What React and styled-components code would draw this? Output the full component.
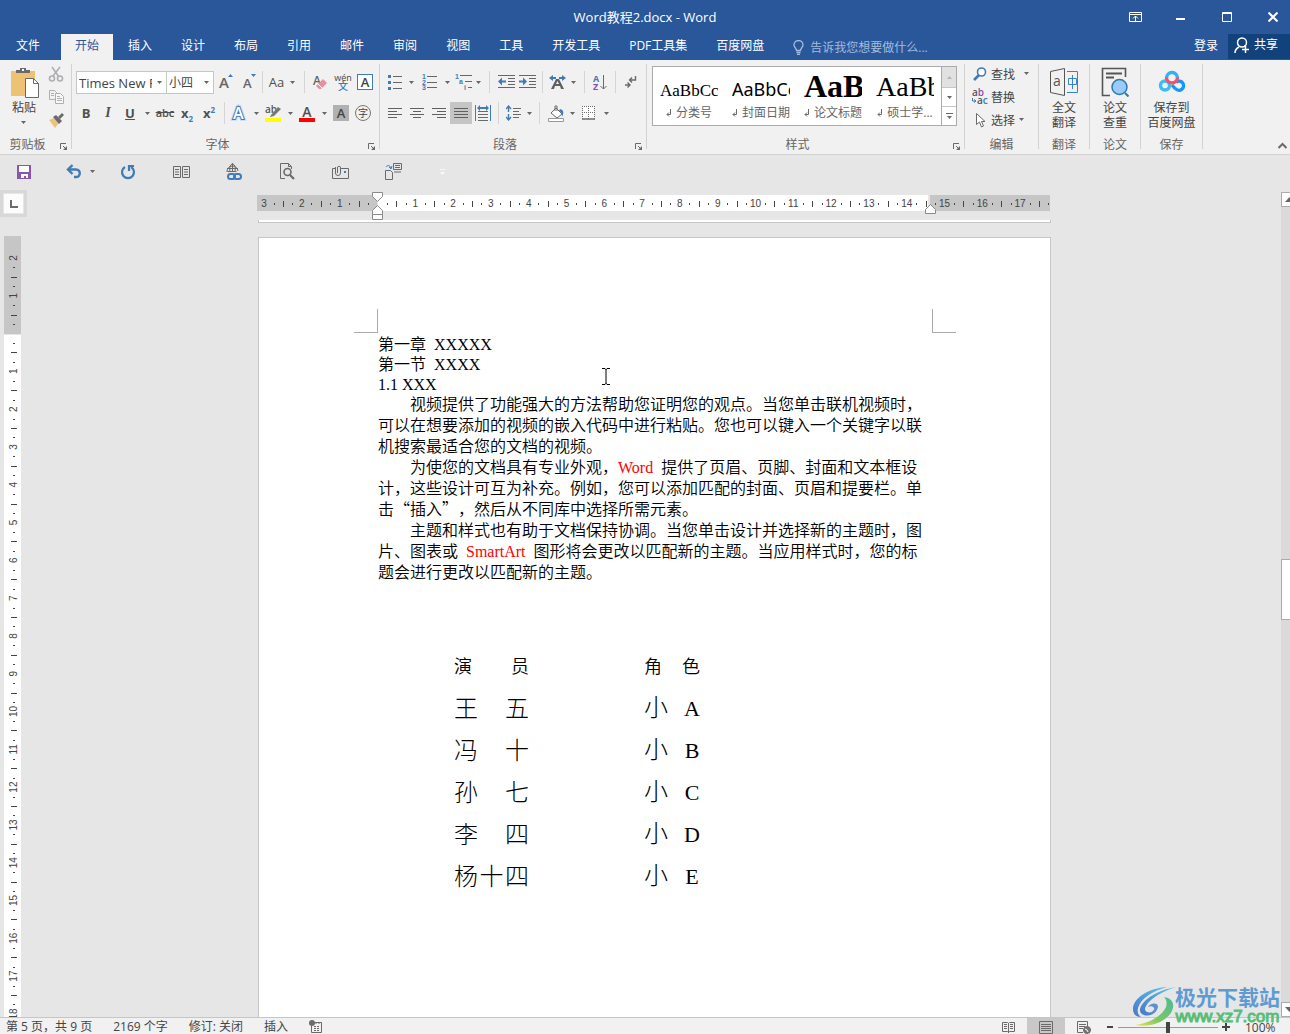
import React from "react";
import styled, { createGlobalStyle, css } from "styled-components";

const UI = '"Open Sans", "Noto Sans CJK SC", sans-serif';
const C = {
  blue: "#2a579a",
  darkBlue: "#12427b",
  ribbon: "#f1f1f1",
  desk: "#e6e6e6",
  line: "#d2d2d2",
  edge: "#c6c6c6",
  ink: "#444444",
  muted: "#666666",
  icon: "#6a6a6a",
  accent: "#417bb5",
};

const Global = createGlobalStyle`
  *, *::before, *::after { box-sizing: border-box; }
  body { margin: 0; background: ${C.desk}; font-family: ${UI}; font-size: 12px; color: ${C.ink}; }
  button, select, input { font: inherit; color: inherit; }
  button { border: 0; padding: 0; background: none; cursor: default; }
  svg { display: block; flex: none; }
`;

const Shell = styled.div`
  position: relative;
  display: flex;
  flex-direction: column;
  height: 100vh;
  overflow: hidden;
`;

/* ---------- title bar and tabs ---------- */
const Header = styled.header`
  background: ${C.blue};
  color: #fff;
`;
const TitleRow = styled.div`
  display: grid;
  grid-template-columns: 1fr auto 1fr;
  align-items: center;
  height: 34px;
`;
const Title = styled.h1`
  grid-column: 2;
  margin: 0;
  font-size: 13px;
  line-height: 18px;
  font-weight: 400;
`;
const WindowControls = styled.div`
  display: flex;
  justify-content: flex-end;
  margin-right: -6px;
`;
const WindowButton = styled.button`
  display: grid;
  place-items: center;
  width: 46px;
  height: 32px;
`;
const TabRow = styled.nav`
  display: flex;
  height: 26px;
`;
const Tabs = styled.div`
  display: flex;
  gap: 1px;
  flex: 1;
`;
const Tab = styled.button`
  padding: ${(p) => (p.$file ? "0 20px 2px 16px" : "0 14px 2px")};
  line-height: 24px;
  white-space: nowrap;
  color: ${(p) => (p.$active ? C.blue : "#fff")};
  background: ${(p) => (p.$active ? C.ribbon : "transparent")};
`;
const TellMe = styled.label`
  display: flex;
  align-items: center;
  gap: 6px;
  margin-left: 14px;
  color: #a3bbdd;
`;
const TellInput = styled.input`
  width: 140px;
  padding: 0;
  border: 0;
  background: none;
  outline: 0;
  &::placeholder { color: #a3bbdd; opacity: 1; }
`;
const Share = styled.button`
  display: flex;
  align-items: center;
  gap: 4px;
  height: 25px;
  padding: 0 12px 3px 6px;
  line-height: 22px;
  background: ${C.darkBlue};
  color: #fff;
`;
const SignIn = styled.button`
  padding: 0 10px 2px;
  line-height: 24px;
  color: #fff;
`;

/* ---------- ribbon ---------- */
const Ribbon = styled.section`
  display: flex;
  height: 95px;
  background: ${C.ribbon};
  border-bottom: 1px solid ${C.line};
`;
const GroupBox = styled.div`
  display: flex;
  flex-direction: column;
`;
const GroupBody = styled.div`
  display: flex;
  flex: 1;
  padding: ${(p) => p.$pad || "0"};
`;
const GroupFoot = styled.div`
  display: flex;
  height: 20px;
  align-items: center;
  color: ${C.muted};
`;
const GroupLabel = styled.span`
  flex: 1;
  text-align: center;
`;
const Launcher = styled.button`
  width: 16px;
  height: 16px;
  padding: 6px 0 0 5px;
`;
const GroupLine = styled.div`
  width: 1px;
  margin: 4px 0 5px;
  background: ${C.line};
`;
const ToolRows = styled.div`
  display: grid;
  align-content: start;
  gap: 9px;
  padding-top: 11px;
`;
const ToolRow = styled.div`
  display: flex;
  height: 22px;
`;
const Tool = styled.button`
  display: flex;
  align-items: center;
  justify-content: center;
  gap: 6px;
  width: ${(p) => p.$w || 22}px;
  height: 22px;
  background: ${(p) => (p.$on ? "#c5c5c5" : "transparent")};
`;
const SepSlot = styled.span`
  display: flex;
  justify-content: center;
  width: ${(p) => p.$w}px;
  &::before { content: ""; width: 1px; background: #d5d5d5; }
`;
const Combo = styled.label`
  display: grid;
  grid-template-columns: minmax(0, 1fr) 14px;
  align-items: center;
  width: ${(p) => p.$w}px;
  height: 23px;
  border: 1px solid ${C.edge};
  background: #fff;
  & + & { border-left: 0; }
  > svg { grid-area: 1 / 2; justify-self: center; }
`;
const ComboSelect = styled.select`
  grid-area: 1 / 1;
  width: 100%;
  height: 21px;
  padding: 0 0 0 2px;
  border: 0;
  outline: 0;
  appearance: none;
  background: transparent;
  font-size: ${(p) => p.$size || 12}px;
`;
const Glyph = styled.span`
  font-size: ${(p) => p.$size || 13}px;
  line-height: 16px;
  font-weight: ${(p) => p.$weight || 700};
  color: ${(p) => p.$color || "#505050"};
  ${(p) => p.$italic && css`font-style: italic; font-family: "Liberation Serif", serif;`}
  ${(p) => p.$deco && css`text-decoration: ${p.$deco};`}
  sub, sup { font-size: 8px; line-height: 0; color: ${C.accent}; }
`;
const ColorBar = styled.span`
  display: grid;
  justify-items: center;
  border-bottom: 4px solid ${(p) => p.$color};
  width: 16px;
  height: 18px;
`;
const FramedA = styled.span`
  width: 16px;
  height: 16px;
  line-height: 14px;
  font-size: 13px;
  font-weight: 600;
  border: 1px solid ${(p) => (p.$fill ? "#b1b1b1" : C.accent)};
  background: ${(p) => (p.$fill ? "#b1b1b1" : "#fff")};
`;
const CircledChar = styled.span`
  width: 16px;
  height: 16px;
  border: 1px solid #777;
  border-radius: 50%;
  font-size: 10px;
  line-height: 14px;
`;
const Pinyin = styled.span`
  display: grid;
  font-size: 9px;
  line-height: 9px;
  b { font-size: 10px; font-weight: 500; color: ${C.accent}; }
`;
const BigButton = styled.button`
  display: flex;
  flex-direction: column;
  align-items: center;
  gap: 2px;
  width: ${(p) => p.$w}px;
  padding-top: 6px;
  line-height: 15px;
`;
const BigIcon = styled.span`
  display: grid;
  place-items: center;
  height: 32px;
`;
const BigText = styled.span`
  display: grid;
  justify-items: center;
  gap: ${(p) => p.$gap || 0}px;
`;
const SideColumn = styled.div`
  display: grid;
  grid-auto-rows: 23px;
  padding: 2px 7px 0 0;
`;
const SideTool = styled.button`
  display: grid;
  place-items: center;
  width: 16px;
`;
const EditColumn = styled.div`
  display: grid;
  grid-auto-rows: 23px;
  padding-top: 2px;
`;
const EditButton = styled.button`
  display: flex;
  align-items: center;
  gap: 3px;
  > svg:last-child { margin-left: ${(p) => p.$gap || 0}px; }
`;
const CollapseSlot = styled.div`
  display: flex;
  flex: 1;
  align-items: flex-end;
  justify-content: flex-end;
  padding: 0 3px 4px;
`;

/* ---------- style gallery ---------- */
const Gallery = styled.div`
  display: flex;
  height: 60px;
  border: 1px solid #ababab;
  background: #fff;
`;
const StyleItem = styled.button`
  width: 72px;
  padding: 0 7px;
  color: ${C.muted};
`;
const Preview = styled.span`
  display: block;
  overflow: hidden;
  height: 34px;
  font-family: "Liberation Serif", serif;
  font-size: 28px;
  line-height: 34px;
  text-align: left;
  white-space: nowrap;
  color: #000;
`;
const Sample = styled.span`
  font-family: ${(p) => p.$font};
  font-size: ${(p) => p.$size}px;
  font-weight: ${(p) => p.$weight || 400};
  line-height: 1;
`;
const StyleName = styled.span`
  display: flex;
  align-items: center;
  justify-content: center;
  gap: 4px;
  line-height: 18px;
  white-space: nowrap;
`;
const GalleryScroll = styled.div`
  display: grid;
  grid-template-rows: 20px 1fr 1fr;
  width: 15px;
  border-left: 1px solid #ababab;
`;
const GalleryButton = styled.button`
  display: grid;
  place-items: center;
  background: ${(p) => (p.$off ? "#e1e1e1" : "#fff")};
  & + & { border-top: 1px solid ${C.edge}; }
`;

/* ---------- quick access ---------- */
const QuickBar = styled.div`
  display: flex;
  align-items: center;
  height: 35px;
  padding: 0 0 2px 13px;
`;
const QuickButton = styled.button`
  display: grid;
  place-items: center;
  width: ${(p) => (p.$narrow ? 14 : 22)}px;
  height: 24px;
  margin-right: ${(p) => p.$after}px;
`;

/* ---------- work area ---------- */
const Work = styled.main`
  display: flex;
  flex: 1;
  min-height: 0;
`;
const Gutter = styled.div`
  width: 28px;
  overflow: hidden;
`;
const TabStop = styled.button`
  display: grid;
  place-items: center;
  width: 27px;
  height: 27px;
  margin-bottom: 19px;
  border: 3px solid #d8d8d8;
  background: #fcfcfc;
  box-shadow: inset 0 0 0 1px #e6e6e6;
`;
const Canvas = styled.div`
  display: flex;
  flex: 1;
  flex-direction: column;
  align-items: center;
  overflow: hidden;
`;
const PreviousPage = styled.div`
  flex: none;
  width: 793px;
  height: 3px;
  margin-bottom: 14px;
  background: #fff;
  border: 1px solid ${C.edge};
  border-top: 0;
`;
const Page = styled.article`
  position: relative;
  flex: 1 0 auto;
  width: 793px;
  padding-top: 71px;
  background: #fff;
  border: 1px solid ${C.edge};
  border-bottom: 0;
  color: #000;
`;
const CropRow = styled.div`
  display: flex;
  justify-content: space-between;
  padding: 0 94px 0 95px;
`;
const CropMark = styled.span`
  width: 24px;
  height: 24px;
  border-bottom: 1px solid #ababab;
  border-${(p) => p.$side}: 1px solid #ababab;
`;
const Body = styled.div`
  padding: 0 118px 0 119px;
  font-family: "Noto Sans CJK SC", sans-serif;
  font-weight: 350;
  font-size: 16px;
  line-height: 21px;
  text-spacing-trim: space-all;
`;
const Heading = styled.h2`
  margin: 0;
  font-size: 16px;
  line-height: 20px;
  font-weight: 350;
`;
const Paragraph = styled.p`
  margin: 0;
  text-indent: 32px;
`;
const Latin = styled.span`
  font-family: "Liberation Serif", serif;
  font-weight: 400;
  line-height: 1;
  color: ${(p) => (p.$red ? "#f00" : "inherit")};
  margin: 0 ${(p) => (p.$after ? 8 : 0)}px 0 ${(p) => (p.$before ? 8 : 0)}px;
`;
const CastTable = styled.table`
  margin: 62px 0 0 76px;
  border-collapse: collapse;
  font-size: 24px;
  font-weight: 300;
  line-height: 24px;
  th { font-size: 18px; font-weight: 350; }
  th, td { height: 42px; padding: 0; }
  th:first-child, td:first-child { padding-right: 115px; }
`;
const Spread = styled.span`
  display: flex;
  align-items: baseline;
  justify-content: space-between;
  width: ${(p) => p.$w}px;
`;
const Letter = styled.span`
  width: 16px;
  text-align: center;
  font-family: "Liberation Serif", serif;
  font-size: 22px;
  font-weight: 400;
`;
const Caret = styled.svg`
  position: absolute;
  left: 343px;
  top: 130px;
`;
const ScrollBar = styled.div`
  width: 9px;
  overflow: hidden;
  padding-top: 2px;
`;
const ScrollInner = styled.div`
  display: flex;
  flex-direction: column;
  width: 17px;
  height: 100%;
  background: #dadada;
`;
const ScrollButton = styled.button`
  display: grid;
  place-items: center;
  height: 15px;
  background: #fff;
  border: 1px solid #ababab;
`;
const ScrollThumb = styled.div`
  height: 61px;
  background: #fff;
  border: 1px solid #ababab;
`;
const Spring = styled.div`
  flex: ${(p) => p.$grow || 1};
`;

/* ---------- status bar ---------- */
const StatusBar = styled.footer`
  display: flex;
  height: 17px;
  padding: 0 13px 0 6px;
  line-height: 17px;
  white-space: nowrap;
  background: ${C.ribbon};
  border-top: 1px solid ${C.edge};
`;
const StatusItem = styled.button`
  margin-right: 21px;
`;
const ViewButton = styled.button`
  display: grid;
  place-items: center;
  width: 38px;
  padding-top: 2px;
  background: ${(p) => (p.$on ? "#c8c8c8" : "transparent")};
`;
const ZoomGroup = styled.div`
  display: flex;
  align-items: center;
  padding-top: 2px;
`;
const ZoomButton = styled.button`
  display: grid;
  place-items: center;
  width: 15px;
`;
const ZoomRange = styled.input`
  width: 100px;
  height: 12px;
  margin: 0;
  appearance: none;
  background: linear-gradient(#999, #999) center / 100% 1px no-repeat;
  &::-webkit-slider-thumb {
    appearance: none;
    width: 4px;
    height: 11px;
    background: ${C.ink};
  }
`;
const ZoomValue = styled.output`
  width: 32px;
  margin-left: 12px;
`;
const Watermark = styled.div`
  position: absolute;
  right: 10px;
  bottom: 7px;
  display: flex;
  align-items: flex-end;
  pointer-events: none;
`;
const WatermarkText = styled.div`
  display: grid;
  justify-items: center;
  font-family: "Noto Sans CJK SC", sans-serif;
  font-weight: 700;
  font-size: 21px;
  line-height: 22px;
  color: #5f9bd3;
  margin-left: -2px;
`;
const WatermarkUrl = styled.span`
  font-family: "Liberation Sans", sans-serif;
  font-weight: 400;
  font-size: 17px;
  line-height: 20px;
  color: #58be78;
  -webkit-text-stroke: 1px #58be78;
`;

/* ---------- drawings ---------- */
const Arrow = ({ up, color = "#666" }) => (
  <svg width="5" height="3" viewBox="0 0 5 3" fill={color}>
    <path d={up ? "M0 3h5L2.5 0z" : "M0 0h5L2.5 3z"} />
  </svg>
);
const Svg = ({ w = 16, h = 16, children, ...rest }) => (
  <svg width={w} height={h} viewBox={`0 0 ${w} ${h}`} fill="none" stroke={C.icon} {...rest}>
    {children}
  </svg>
);
const lines = (list) => list.map(([x1, x2, y], i) => <path key={i} d={`M${x1} ${y + 0.5}H${x2}`} />);

const PasteIcon = () => (
  <Svg w={30} h={32}>
    <path d="M2 5h24v25H2z" fill="#eec274" stroke="none" />
    <path d="M7 7V4h4V2h6v2h4v3z" fill="#6a6a6a" stroke="none" />
    <path d="M13 3h2v2h-2z" fill="#fff" stroke="none" />
    <path d="M16.500 12.500h8l5 5v14h-13z" fill="#fff" />
    <path d="M24.500 12.500v5h5" />
  </Svg>
);
const CutIcon = () => (
  <Svg stroke="#b0aeb2" strokeWidth="1.6">
    <path d="M4 1l7 10M12 1L5 10" />
    <circle cx="4" cy="12.500" r="2.500" />
    <circle cx="12" cy="12.500" r="2.500" />
  </Svg>
);
const CopyIcon = () => (
  <Svg stroke="#b0aeb2">
    <path d="M1.500 1.500h5l2 2v7h-7z" />
    <path d="M7.500 4.500h5l3 3v7h-8z" fill="#f8f6f8" />
    <path d="M3 4.500h3M3 6.500h3M9 7.500h3M9 9.500h5M9 11.500h5" />
  </Svg>
);
const BrushIcon = () => (
  <Svg stroke="none">
    <path d="M1 8l5-2 5 5-4 5z" fill="#eec27c" />
    <path d="M5 5l3-2 6 6-3 3z" fill="#6a6a6a" />
    <path d="M10 5l4-4 2 2-4 4z" fill="#6a6a6a" />
  </Svg>
);
const ShrinkGrow = ({ up }) => (
  <Svg w={16} h={18} stroke="none">
    <text x={up ? 1 : 2} y="15" fontSize={up ? 15 : 13} fontFamily="Open Sans" fontWeight="600" fill="#666">A</text>
    <path d={up ? "M10 4h5l-2.500-3z" : "M10 1h5l-2.500 3z"} fill={C.accent} />
  </Svg>
);
const EraserIcon = () => (
  <Svg stroke="none">
    <text x="1" y="11" fontSize="12" fontFamily="Open Sans" fontWeight="600" fill="#666">A</text>
    <path d="M4 12l7-7 4 4-6 6H7z" fill="#ea8f9d" />
    <path d="M6 10l4 4" stroke="#fff" />
  </Svg>
);
const OutlineIcon = () => (
  <Svg w={18} h={18}>
    <text x="3" y="15" fontSize="16" fontFamily="Open Sans" fontWeight="600" fill="#fff" stroke="#cfe0f3" strokeWidth="4" paintOrder="stroke">A</text>
    <text x="3" y="15" fontSize="16" fontFamily="Open Sans" fontWeight="600" fill="#fff" stroke={C.accent} strokeWidth="2" paintOrder="stroke">A</text>
  </Svg>
);
const HighlightIcon = () => (
  <Svg h={18} stroke="none">
    <text x="0" y="9" fontSize="10" fontFamily="Open Sans" fontWeight="600" fill="#555">ab</text>
    <path d="M6 11l7-8 3 2-7 7-4 1z" fill="#777" />
    <path d="M0 14h16v4H0z" fill="#ff0" />
  </Svg>
);
const BulletsIcon = () => (
  <Svg w={14} stroke="#666">
    <path d="M0 1h3v3H0zM0 7h3v3H0zM0 13h3v3H0z" fill={C.accent} stroke="none" />
    {lines([[5, 14, 2], [5, 14, 8], [5, 14, 14]])}
  </Svg>
);
const Digits = ({ items }) =>
  items.map(([t, x, y]) => (
    <text key={t} x={x} y={y} fontSize="7" fontFamily="Liberation Sans" fontWeight="700" fill={C.accent} stroke="none">{t}</text>
  ));
const NumbersIcon = () => (
  <Svg w={15} stroke="#666">
    <Digits items={[["1", 0, 5], ["2", 0, 11], ["3", 0, 16]]} />
    {lines([[5, 15, 2], [5, 15, 8], [5, 15, 13]])}
  </Svg>
);
const MultiIcon = () => (
  <Svg w={17} stroke="#666">
    <Digits items={[["1", 0, 5], ["a", 4, 10], ["i", 9, 16]]} />
    {lines([[5, 17, 1], [10, 17, 7], [13, 17, 13]])}
  </Svg>
);
const IndentIcon = ({ out }) => (
  <Svg w={17} stroke="#666">
    {lines([[0, 17, 1], [10, 17, 4], [10, 17, 7], [10, 17, 10], [0, 17, 13]])}
    <path d={out ? "M0 7.500l4-4v3h4v2H4v3z" : "M8 7.500l-4-4v3H0v2h4v3z"} fill={C.accent} stroke="none" />
  </Svg>
);
const ScaleIcon = () => (
  <Svg w={17} stroke="none">
    <path d="M0 4l4-3v2h3v2H4v2zM17 4l-4-3v2h-3v2h3v2z" fill={C.accent} />
    <path d="M2 15L7 5h3l5 10h-3l-1-3H6l-1 3zm5-5h3L8.500 7z" fill="#606060" />
  </Svg>
);
const SortIcon = () => (
  <Svg w={14} h={17}>
    <text x="0" y="8" fontSize="9" fontFamily="Open Sans" fontWeight="700" fill={C.accent} stroke="none">A</text>
    <text x="0" y="16" fontSize="9" fontFamily="Open Sans" fontWeight="700" fill="#8b4db0" stroke="none">Z</text>
    <path d="M10.500 1v14M7.500 12l3 3 3-3" />
  </Svg>
);
const MarksIcon = () => (
  <Svg w={12} strokeWidth="1.400">
    <path d="M10.500 2v4h-6M7 3.500L4.500 6 7 8.500M0 11h5M2.500 8.500L5 11l-2.500 2.500" />
  </Svg>
);
const alignRows = {
  left: [[0, 14, 2], [0, 9, 5], [0, 14, 8], [0, 9, 11]],
  center: [[0, 14, 2], [3, 11, 5], [0, 14, 8], [3, 11, 11]],
  right: [[0, 14, 2], [5, 14, 5], [0, 14, 8], [5, 14, 11]],
  full: [[0, 14, 2], [0, 14, 5], [0, 14, 8], [0, 14, 11]],
};
const AlignIcon = ({ kind }) => <Svg w={14} h={14} stroke="#606060">{lines(alignRows[kind])}</Svg>;
const DistributeIcon = () => (
  <Svg>
    <path d="M.5 0v16M15.500 0v16" stroke={C.accent} />
    <path d="M2 3l3-3v2h6V0l3 3-3 3V4H5v2z" fill={C.accent} stroke="none" />
    {lines([[3, 13, 6], [3, 13, 9], [3, 13, 12], [3, 13, 15]])}
  </Svg>
);
const SpacingIcon = () => (
  <Svg w={15}>
    <path d="M2.500 1v6M2.500 9v6M0 4l2.500-3L5 4M0 12l2.500 3L5 12" stroke={C.accent} strokeWidth="1.400" />
    {lines([[7, 15, 3], [7, 13, 6], [7, 15, 9], [7, 13, 12]])}
  </Svg>
);
const BucketIcon = () => (
  <Svg w={17} h={17}>
    <path d="M3 8l5-5 6 6-5 4z" fill="#fff" />
    <path d="M7 6V1h2v5" />
    <path d="M12 4c4 1 4 4 2 8 0-3 0-5-3-6z" fill={C.accent} stroke="none" />
    <path d="M.5 13.500h15v3H.5z" fill="#fff" stroke="#999" />
  </Svg>
);
const BordersIcon = () => (
  <Svg w={14} h={14}>
    <path d="M.5.500h12v12H.5z" fill="#fff" stroke="none" />
    <path d="M0 .5h13M0 6.500h13M.5 0v13M6.500 0v13M12.500 0v13" strokeDasharray="1 1" />
    <path d="M0 13h13" strokeWidth="1.500" />
  </Svg>
);
const FindIcon = () => (
  <Svg stroke={C.accent}>
    <circle cx="9.500" cy="6" r="4" strokeWidth="1.600" fill="#fff" />
    <path d="M7 9l-5 5" strokeWidth="2.600" />
  </Svg>
);
const ReplaceIcon = () => (
  <Svg w={16} h={17} stroke="none" fontFamily="Open Sans" fontSize="10" fontWeight="600">
    <text x="0" y="8" fill="#555">a<tspan fill="#8b4db0">b</tspan></text>
    <text x="5" y="16" fill="#555">a<tspan fill={C.accent}>c</tspan></text>
    <path d="M.5 10v3h3M2 11.500L4 13l-2 1.500" stroke={C.accent} />
  </Svg>
);
const PointerIcon = () => (
  <Svg><path d="M4.500 1.500v11l3-2.500 2 5 2-1-2-4.500h3.500z" fill="#fff" /></Svg>
);
const TranslateIcon = () => (
  <Svg w={28} h={28}>
    <path d="M.5 3.500l14-3v27l-14-3z" stroke="#555" />
    <path d="M17 3.500h10.500v21H17" stroke="#3a82d0" />
    <path d="M18.500 10.500h8v6h-8zM22.500 7v14" stroke="#3a82d0" />
    <text x="3" y="18" fontSize="14" fontFamily="Open Sans" fill="#555" stroke="none">a</text>
  </Svg>
);
const PaperIcon = () => (
  <Svg w={28} h={30} stroke="#555">
    <path d="M9 28.500H1.500V1.500h23V10" strokeWidth="1.600" />
    <path d="M5 6.500h16M5 10.500h8" strokeWidth="2" />
    <circle cx="18.500" cy="20" r="7.500" fill="#9acbf8" stroke="#2a7ab0" strokeWidth="1.500" />
    <path d="M24 26l3.500 3.500" stroke="#2a7ab0" strokeWidth="2" />
  </Svg>
);
const NetdiskIcon = () => (
  <Svg w={28} h={24} strokeWidth="3.400">
    <circle cx="7" cy="15.500" r="4.500" stroke="#38bdf8" />
    <path d="M17.500 18.500a4.500 4.500 0 1 0 1-6.500" stroke="#1598f5" />
    <path d="M14 15l3.500 4" stroke="#1598f5" />
    <path d="M8.500 8a5.500 5.500 0 0 1 11 0" stroke="#35b0f4" />
    <path d="M8.500 7.500a5.500 5.500 0 0 0 11 0" stroke="#f4516c" />
  </Svg>
);
const Zero = 119.5;
const Cm = 37.8;
const HRuler = () => {
  const marks = [];
  for (let q = -12; q <= 71; q++) {
    const x = Zero + (q * Cm) / 4;
    if (q === 0 || x > 792) continue;
    if (q % 4 === 0) marks.push(<text key={q} x={x} y="17" textAnchor="middle">{Math.abs(q / 4)}</text>);
    else if (q % 2 === 0) marks.push(<path key={q} d={`M${Math.round(x)} 11h1v6h-1z`} />);
    else marks.push(<path key={q} d={`M${Math.round(x)} 13h1v2h-1z`} />);
  }
  return (
    <svg width="793" height="30" viewBox="0 0 793 30" overflow="visible" fontFamily="Liberation Sans" fontSize="10" fill="#444">
      <path d="M-1 5H119v16H-1zM672 5h120v16H672z" fill="#c6c6c6" />
      <path d="M120 5h550v16H120z" fill="#fff" />
      {marks}
      <g fill="#fff" stroke="#8a8a8a">
        <path d="M114.500 2.500h10v4l-5 5-5-5zM114.500 24.500v-4l5-5 5 5v4zM114.500 24.500h10v5h-10z" />
        <path d="M667.500 23.500v-4l5-5 5 5v4z" />
      </g>
    </svg>
  );
};
const VRuler = () => {
  const marks = [];
  for (let q = -8; q <= 73; q++) {
    const y = 97.5 + (q * Cm) / 4;
    if (q === 0) continue;
    if (q % 4 === 0)
      marks.push(<text key={q} transform={`translate(13 ${y}) rotate(-90)`} textAnchor="middle">{Math.abs(q / 4)}</text>);
    else if (q % 2 === 0) marks.push(<path key={q} d={`M7 ${Math.round(y)}h6v1H7z`} />);
    else marks.push(<path key={q} d={`M9 ${Math.round(y)}h2v1H9z`} />);
  }
  return (
    <svg width="28" height="790" viewBox="-4 0 28 790" fontFamily="Liberation Sans" fontSize="10" fill="#444">
      <path d="M0 0h17v98H0z" fill="#c6c6c6" />
      <path d="M0 99h17v691H0z" fill="#fff" />
      {marks}
    </svg>
  );
};

const Group = ({ label, launcher, pad, children }) => (
  <>
    <GroupBox role="group" aria-label={label}>
      <GroupBody $pad={pad}>{children}</GroupBody>
      <GroupFoot>
        <GroupLabel>{label}</GroupLabel>
        {launcher && (
          <Launcher aria-label={label + "设置"}>
            <Svg w={8} h={8}>
              <path d="M.5 6V.5H6M3 3l3.500 3.500" />
              <path d="M7 3v4H3z" fill={C.icon} stroke="none" />
            </Svg>
          </Launcher>
        )}
      </GroupFoot>
    </GroupBox>
    <GroupLine />
  </>
);
const Drop = ({ w }) => <Tool $w={w} aria-label="更多"><Arrow /></Tool>;

const TABS = ["文件", "开始", "插入", "设计", "布局", "引用", "邮件", "审阅", "视图", "工具", "开发工具", "PDF工具集", "百度网盘"];
const STYLES = [
  { name: "分类号", text: "AaBbCc", size: 17, font: '"Liberation Serif", serif' },
  { name: "封面日期", text: "AaBbCc", size: 18, font: '"Noto Sans", sans-serif' },
  { name: "论文标题", text: "AaBb", size: 32, weight: 700, font: '"Liberation Serif", serif' },
  { name: "硕士学...", text: "AaBb", size: 28, font: '"Liberation Serif", serif' },
];
const CAST = [
  ["王五", "A"],
  ["冯十", "B"],
  ["孙七", "C"],
  ["李四", "D"],
  ["杨十四", "E"],
];
const spread = (text) => [...text].map((ch) => <span key={ch}>{ch}</span>);

export default function App() {
  return (
    <Shell>
      <Global />
      <Header>
        <TitleRow>
          <Title>Word教程2.docx - Word</Title>
          <WindowControls>
            <WindowButton aria-label="功能区显示选项">
              <Svg w={13} h={10} stroke="#fff"><path d="M.5.500h12v9H.5zM0 2.500h13M6.500 9V4M4 6.500L6.500 4 9 6.500" /></Svg>
            </WindowButton>
            <WindowButton aria-label="最小化">
              <Svg w={10} h={10} stroke="#fff" strokeWidth="2"><path d="M0 7h9" /></Svg>
            </WindowButton>
            <WindowButton aria-label="最大化">
              <Svg w={10} h={10} stroke="#fff"><path d="M.5.500h9v9H.5zM0 1.500h10" /></Svg>
            </WindowButton>
            <WindowButton aria-label="关闭">
              <Svg w={10} h={10} stroke="#fff" strokeWidth="2"><path d="M.5.500l9 9M9.500.500l-9 9" /></Svg>
            </WindowButton>
          </WindowControls>
        </TitleRow>
        <TabRow>
          <Tabs>
            {TABS.map((t, i) => (
              <Tab key={t} $file={i === 0} $active={i === 1}>{t}</Tab>
            ))}
            <TellMe>
              <Svg w={11} h={15} stroke="#a3bbdd" strokeWidth="1.300">
                <path d="M3.500 10.500C3.500 8 1 7.500 1 5a4.500 4.500 0 0 1 9 0c0 2.500-2.500 3-2.500 5.500zM3.500 12.500h4M4 14.500h3" />
              </Svg>
              <TellInput placeholder="告诉我您想要做什么..." aria-label="操作说明搜索" />
            </TellMe>
          </Tabs>
          <SignIn>登录</SignIn>
          <Share>
            <Svg w={16} h={17} stroke="#fff" strokeWidth="1.500">
              <circle cx="8" cy="5.500" r="4.500" />
              <path d="M1 16c0-3 2-5 4-6M11 9.500l-1-.5M11.500 9v7M8 12.500h7" />
            </Svg>
            共享
          </Share>
        </TabRow>
      </Header>

      <Ribbon>
        <Group label="剪贴板" launcher>
          <BigButton $w={48}>
            <BigIcon><PasteIcon /></BigIcon>
            <BigText $gap={6}>粘贴<Arrow /></BigText>
          </BigButton>
          <SideColumn>
            <SideTool aria-label="剪切"><CutIcon /></SideTool>
            <SideTool aria-label="复制"><CopyIcon /></SideTool>
            <SideTool aria-label="格式刷"><BrushIcon /></SideTool>
          </SideColumn>
        </Group>

        <Group label="字体" launcher pad="0 3px 0 4px">
          <ToolRows>
            <ToolRow>
              <Combo $w={91}>
                <ComboSelect $size={13} aria-label="字体"><option>Times New Roman</option></ComboSelect>
                <Arrow />
              </Combo>
              <Combo $w={47}>
                <ComboSelect aria-label="字号"><option>小四</option></ComboSelect>
                <Arrow />
              </Combo>
              <Tool $w={24} aria-label="增大字号"><ShrinkGrow up /></Tool>
              <Tool aria-label="减小字号"><ShrinkGrow /></Tool>
              <SepSlot $w={4} />
              <Tool $w={36}><Glyph $weight={400}>Aa</Glyph><Arrow /></Tool>
              <SepSlot $w={8} />
              <Tool $w={24} aria-label="清除格式"><EraserIcon /></Tool>
              <Tool aria-label="拼音指南"><Pinyin>wén<b>文</b></Pinyin></Tool>
              <Tool aria-label="字符边框"><FramedA>A</FramedA></Tool>
            </ToolRow>
            <ToolRow>
              <Tool $w={20}><Glyph>B</Glyph></Tool>
              <Tool $w={24}><Glyph $italic $size={14}>I</Glyph></Tool>
              <Tool $w={20}><Glyph $deco="underline">U</Glyph></Tool>
              <Drop w={14} />
              <Tool><Glyph $size={11} $weight={600} $deco="line-through">abc</Glyph></Tool>
              <Tool><Glyph>x<sub>2</sub></Glyph></Tool>
              <Tool><Glyph>x<sup>2</sup></Glyph></Tool>
              <SepSlot $w={8} />
              <Tool aria-label="文本效果"><OutlineIcon /></Tool>
              <Drop w={12} />
              <Tool aria-label="突出显示"><HighlightIcon /></Tool>
              <Drop w={12} />
              <Tool aria-label="字体颜色"><ColorBar $color="#f00"><Glyph $size={14} $weight={600}>A</Glyph></ColorBar></Tool>
              <Drop w={12} />
              <Tool aria-label="字符底纹"><FramedA $fill>A</FramedA></Tool>
              <Tool aria-label="带圈字符"><CircledChar>字</CircledChar></Tool>
            </ToolRow>
          </ToolRows>
        </Group>

        <Group label="段落" launcher pad="0 4px">
          <ToolRows>
            <ToolRow>
              <Tool aria-label="项目符号"><BulletsIcon /></Tool>
              <Drop w={10} />
              <Tool $w={26} aria-label="编号"><NumbersIcon /></Tool>
              <Drop w={10} />
              <Tool aria-label="多级列表"><MultiIcon /></Tool>
              <Drop w={8} />
              <SepSlot $w={14} />
              <Tool $w={20} aria-label="减少缩进"><IndentIcon out /></Tool>
              <Tool aria-label="增加缩进"><IndentIcon /></Tool>
              <SepSlot $w={8} />
              <Tool aria-label="中文版式"><ScaleIcon /></Tool>
              <Drop w={10} />
              <SepSlot $w={12} />
              <Tool $w={20} aria-label="排序"><SortIcon /></Tool>
              <SepSlot $w={10} />
              <Tool aria-label="显示编辑标记"><MarksIcon /></Tool>
            </ToolRow>
            <ToolRow>
              <Tool aria-label="左对齐"><AlignIcon kind="left" /></Tool>
              <Tool aria-label="居中"><AlignIcon kind="center" /></Tool>
              <Tool aria-label="右对齐"><AlignIcon kind="right" /></Tool>
              <Tool $on aria-label="两端对齐"><AlignIcon kind="full" /></Tool>
              <Tool aria-label="分散对齐"><DistributeIcon /></Tool>
              <SepSlot $w={8} />
              <Tool aria-label="行距"><SpacingIcon /></Tool>
              <Drop w={10} />
              <SepSlot $w={10} />
              <Tool $w={24} aria-label="底纹"><BucketIcon /></Tool>
              <Drop w={8} />
              <Tool $w={26} aria-label="边框"><BordersIcon /></Tool>
              <Drop w={8} />
            </ToolRow>
          </ToolRows>
        </Group>

        <Group label="样式" launcher pad="6px 7px 0 5px">
          <Gallery>
            {STYLES.map((s) => (
              <StyleItem key={s.name}>
                <Preview><Sample $font={s.font} $size={s.size} $weight={s.weight}>{s.text}</Sample></Preview>
                <StyleName>
                  <Svg w={6} h={8}><path d="M4.500 0v5.500H1M3 3.500l-2 2 2 2" /></Svg>
                  {s.name}
                </StyleName>
              </StyleItem>
            ))}
            <GalleryScroll>
              <GalleryButton $off aria-label="上一行"><Arrow up color="#b5b5b5" /></GalleryButton>
              <GalleryButton aria-label="下一行"><Arrow /></GalleryButton>
              <GalleryButton aria-label="其他">
                <Svg w={7} h={7}><path d="M0 .5h7" /><path d="M1 3h5L3.500 6z" fill={C.icon} stroke="none" /></Svg>
              </GalleryButton>
            </GalleryScroll>
          </Gallery>
        </Group>

        <Group label="编辑" pad="0 9px 0 7px">
          <EditColumn>
            <EditButton $gap={6}><FindIcon />查找<Arrow /></EditButton>
            <EditButton><ReplaceIcon /><span>替换</span></EditButton>
            <EditButton $gap={1}><PointerIcon />选择<Arrow /></EditButton>
          </EditColumn>
        </Group>
        <Group label="翻译">
          <BigButton $w={50}><BigIcon><TranslateIcon /></BigIcon><BigText><span>全文</span><span>翻译</span></BigText></BigButton>
        </Group>
        <Group label="论文">
          <BigButton $w={50}><BigIcon><PaperIcon /></BigIcon><BigText><span>论文</span><span>查重</span></BigText></BigButton>
        </Group>
        <Group label="保存">
          <BigButton $w={61}><BigIcon><NetdiskIcon /></BigIcon><BigText><span>保存到</span><span>百度网盘</span></BigText></BigButton>
        </Group>
        <CollapseSlot>
          <button aria-label="折叠功能区"><Svg w={9} h={8} strokeWidth="2"><path d="M.5 6l4-4 4 4" /></Svg></button>
        </CollapseSlot>
      </Ribbon>

      <QuickBar>
        <QuickButton $after={28} aria-label="保存文档">
          <Svg w={14} h={14} stroke="none"><path d="M0 0h14v14H0z" fill="#8a55b0" /><path d="M2 1h10v6H2zM4 9h7v4H9v-2H7v2H4z" fill="#fff" /></Svg>
        </QuickButton>
        <QuickButton $after={0} aria-label="撤消">
          <Svg stroke={C.accent} strokeWidth="2.400"><path d="M2 5.500h8c5 0 5 7.500 0 7.500H8" /><path d="M6.500 1L2 5.500 6.500 10" /></Svg>
        </QuickButton>
        <QuickButton $narrow $after={18} aria-label="撤消列表"><Arrow /></QuickButton>
        <QuickButton $after={31} aria-label="恢复">
          <Svg stroke={C.accent} strokeWidth="2.200"><path d="M5 3a6 6 0 1 0 6 0" /><path d="M9 7V2h5" /></Svg>
        </QuickButton>
        <QuickButton $after={31} aria-label="并排查看">
          <Svg w={17} h={12}><path d="M.5.500h7v11h-7zM9.500.500h7v11h-7zM2 3.500h4M2 6h4M2 8.500h4M11 3.500h4M11 6h4M11 8.500h4" /></Svg>
        </QuickButton>
        <QuickButton $after={31} aria-label="超链接">
          <Svg h={17}>
            <path d="M1 9a5.500 5.500 0 1 1 11-1M1 5.500h11M1.500 8.500h9M6.500.500v8M4 8c-1-3 0-6 2.500-7.500C9 2 10 5 9 8" />
            <g stroke={C.accent} strokeWidth="2"><rect x="2" y="11" width="7" height="5" rx="2.500" /><rect x="8" y="11" width="7" height="5" rx="2.500" /></g>
          </Svg>
        </QuickButton>
        <QuickButton $after={31} aria-label="打印预览">
          <Svg w={15} h={17}><path d="M5 15.500H.5V.500h8l3 3V6M8.500.500v3h3" /><circle cx="7.500" cy="9" r="3.500" strokeWidth="1.600" /><path d="M10 12l4 4" strokeWidth="2.200" /></Svg>
        </QuickButton>
        <QuickButton $after={31} aria-label="附件">
          <Svg w={17}><path d="M3 4.500H.5v10h16v-10H9" /><path d="M3.500 3v6a2 2 0 0 0 5 0V3a2 2 0 0 0-3 0v6" /><path d="M12 7h2v2h-2z" fill={C.accent} stroke="none" /></Svg>
        </QuickButton>
        <QuickButton $after={31} aria-label="新建窗口">
          <Svg w={17} h={17}><path d="M.5 7.500h5l2 2v7h-7zM8.500.500h8v6h-8zM10 2.500h5M10 4.500h5M9 9h7" /><path d="M1 4c1-2 4-2 5 1M4 4l2 2 1-3" stroke={C.accent} /></Svg>
        </QuickButton>
        <QuickButton $narrow $after={0} aria-label="自定义工具栏">
          <Svg w={5} h={6} stroke="none" fill="#f8f8f8"><path d="M0 0h5v1H0zM0 3h5L2.500 6z" /></Svg>
        </QuickButton>
      </QuickBar>

      <Work>
        <Gutter>
          <TabStop aria-label="制表符"><Svg w={8} h={8} strokeWidth="2"><path d="M1 0v7h7" /></Svg></TabStop>
          <VRuler />
        </Gutter>
        <Canvas>
          <HRuler />
          <PreviousPage />
          <Page>
            <CropRow><CropMark $side="right" /><CropMark $side="left" /></CropRow>
            <Body lang="zh-CN">
              <Heading>第一章<Latin $before>XXXXX</Latin></Heading>
              <Heading>第一节<Latin $before>XXXX</Latin></Heading>
              <Heading><Latin>1.1 XXX</Latin></Heading>
              <Paragraph>
                视频提供了功能强大的方法帮助您证明您的观点。当您单击联机视频时，可以在想要添加的视频的嵌入代码中进行粘贴。您也可以键入一个关键字以联机搜索最适合您的文档的视频。
              </Paragraph>
              <Paragraph>
                为使您的文档具有专业外观，<Latin $red $after>Word</Latin>提供了页眉、页脚、封面和文本框设计，这些设计可互为补充。例如，您可以添加匹配的封面、页眉和提要栏。单击“插入”，然后从不同库中选择所需元素。
              </Paragraph>
              <Paragraph>
                主题和样式也有助于文档保持协调。当您单击设计并选择新的主题时，图片、图表或<Latin $red $before $after>SmartArt</Latin>图形将会更改以匹配新的主题。当应用样式时，您的标题会进行更改以匹配新的主题。
              </Paragraph>
              <CastTable>
                <thead>
                  <tr>
                    <th><Spread $w={75}>{spread("演员")}</Spread></th>
                    <th><Spread $w={56}>{spread("角色")}</Spread></th>
                  </tr>
                </thead>
                <tbody>
                  {CAST.map(([name, letter]) => (
                    <tr key={name}>
                      <td><Spread $w={75}>{spread(name)}</Spread></td>
                      <td><Spread $w={56}><span>小</span><Letter>{letter}</Letter></Spread></td>
                    </tr>
                  ))}
                </tbody>
              </CastTable>
            </Body>
            <Caret width="8" height="17" viewBox="0 0 8 17" fill="none" stroke="#000">
              <path d="M0 .5h3l1 1 1-1h3M4 1v15M0 16.500h3l1-1 1 1h3" />
            </Caret>
          </Page>
        </Canvas>
        <ScrollBar>
          <ScrollInner>
            <ScrollButton aria-label="向上滚动"><Svg w={9} h={5} stroke="none" fill="#666"><path d="M0 5h9L4.500 0z" /></Svg></ScrollButton>
            <Spring $grow={352} />
            <ScrollThumb />
            <Spring $grow={381} />
            <ScrollButton aria-label="向下滚动"><Svg w={9} h={5} stroke="none" fill="#666"><path d="M0 0h9L4.500 5z" /></Svg></ScrollButton>
          </ScrollInner>
        </ScrollBar>
      </Work>

      <StatusBar>
        <StatusItem>第 5 页，共 9 页</StatusItem>
        <StatusItem>2169 个字</StatusItem>
        <StatusItem>修订: 关闭</StatusItem>
        <StatusItem>插入</StatusItem>
        <StatusItem aria-label="宏录制">
          <Svg w={13} h={13}><path d="M2.500 6v6.500h10V2.500H6" /><circle cx="3" cy="3" r="3" fill={C.icon} stroke="none" /><path d="M6 3h7M5 6.500h6M5 8.500h6M5 10.500h6" strokeDasharray="2 1" /></Svg>
        </StatusItem>
        <Spring />
        <ViewButton aria-label="阅读视图">
          <Svg w={13} h={13}><path d="M.5 1.500h5l1 1 1-1h5v9h-5l-1 1-1-1h-5zM6.500 2v10M2 3.500h3M2 5.500h3M2 7.500h3M8 3.500h3M8 5.500h3M8 7.500h3" /></Svg>
        </ViewButton>
        <ViewButton $on aria-label="页面视图">
          <Svg w={14} h={13}><path d="M.5.500h13v12H.5zM2 3.500h10M2 5.500h10M2 7.500h10M2 9.500h10" /></Svg>
        </ViewButton>
        <ViewButton aria-label="Web 版式视图">
          <Svg w={14} h={13}><path d="M6 11.500H.5V.500h10V5M2 3.500h7M2 5.500h6M2 7.500h4" /><circle cx="10" cy="9" r="3.500" fill="#777" /><path d="M8 8l2 1 1 2" stroke="#fff" /></Svg>
        </ViewButton>
        <ZoomGroup>
          <ZoomButton aria-label="缩小"><Svg w={7} h={8} stroke={C.ink} strokeWidth="2"><path d="M0 4h6" /></Svg></ZoomButton>
          <ZoomRange type="range" aria-label="显示比例" defaultValue={50} />
          <ZoomButton aria-label="放大"><Svg w={8} h={8} stroke={C.ink} strokeWidth="2"><path d="M0 4h8M4 0v8" /></Svg></ZoomButton>
          <ZoomValue>100%</ZoomValue>
        </ZoomGroup>
      </StatusBar>

      <Watermark>
        <svg width="46" height="42" viewBox="0 0 46 42">
          <defs>
            <linearGradient id="swooshBlue" x1="1" y1="0" x2="0" y2="1"><stop offset="0" stopColor="#5cc4e8" /><stop offset="1" stopColor="#4a78c8" /></linearGradient>
            <linearGradient id="swooshGreen" x1="1" y1="0" x2="0" y2="1"><stop offset="0" stopColor="#4fb89a" /><stop offset=".6" stopColor="#7cc864" /><stop offset="1" stopColor="#f0e24a" /></linearGradient>
          </defs>
          <path d="M36 2C18 3 2 13 2 24c0 5 3 8 8 8-3-2-4-5-3-9C10 13 22 6 36 2z" fill="url(#swooshBlue)" />
          <path d="M45 2C27 5 12 14 9 24c-1 8 12 9 17 1-6 4-12 3-12-1C16 15 30 7 45 2z" fill="url(#swooshBlue)" />
          <path d="M17 22c2-4 10-5 10 0-1 5-6 7-9 6 4-1 6-4 5-5-1-2-4-2-6-1z" fill="#5a8fd0" />
          <path d="M33 12c7 1 10 5 9 11C39 35 22 43 4 40c15-2 27-9 31-18 1-4 1-7-2-10z" fill="url(#swooshGreen)" />
        </svg>
        <WatermarkText>
          极光下载站
          <WatermarkUrl>www.xz7.com</WatermarkUrl>
        </WatermarkText>
      </Watermark>
    </Shell>
  );
}
